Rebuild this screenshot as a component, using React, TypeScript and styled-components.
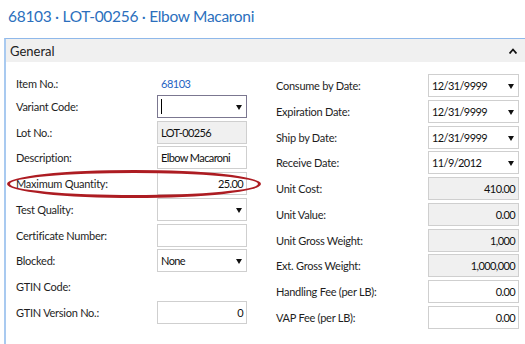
import React from "react";
import styled, { createGlobalStyle } from "styled-components";

const Global = createGlobalStyle`
  html, body { margin: 0; padding: 0; background: #fff; }
  body { font-family: Lato, "Open Sans", sans-serif; }
`;

const Page = styled.div`
  width: 525px;
  height: 344px;
  overflow: hidden;
  position: relative;
`;

const Title = styled.h1`
  margin: 0;
  padding: 7px 0 0 8px;
  height: 32px;
  box-sizing: border-box;
  font-size: 15.5px;
  font-weight: 400;
  color: #2b6fbd;
  letter-spacing: -0.3px;
  white-space: nowrap;
`;

const Panel = styled.section`
  margin-top: 6px;
  margin-left: 4px;
  border-left: 2px solid #a9caf0;
  border-top: 1px solid #8fb8ea;
  height: 310px;
`;

const PanelHeader = styled.div`
  height: 23px;
  background: #f0f0f0;
  display: flex;
  align-items: center;
  justify-content: space-between;
  padding: 0 8px 0 4px;
  font-size: 13px;
  color: #222;
`;

const Body = styled.div`
  display: grid;
  grid-template-columns: 231px 243px;
  column-gap: 29px;
  padding: 12px 0 0 10px;
`;

const Column = styled.div`
  display: flex;
  flex-direction: column;
  gap: 2.75px;
`;

const Row = styled.div<{ $labelWidth: number; $short?: boolean }>`
  position: relative;
  display: grid;
  grid-template-columns: ${(p) => p.$labelWidth}px 1fr;
  align-items: center;
  height: ${(p) => (p.$short ? 18 : 23)}px;
  font-size: 11px;
  color: #1e1e1e;
`;

const Label = styled.span`
  white-space: nowrap;
  letter-spacing: -0.25px;
`;

const Box = styled.div<{ $readOnly?: boolean; $focused?: boolean; $align?: string }>`
  position: relative;
  height: 23px;
  box-sizing: border-box;
  border: 1px solid ${(p) => (p.$focused ? "#7b7790" : "#cfcfcf")};
  background: ${(p) => (p.$readOnly ? "#f0f0f0" : "#fff")};
  display: flex;
  align-items: center;
  justify-content: ${(p) => (p.$align === "right" ? "flex-end" : "flex-start")};
  padding: 0 3px 0 3px;
  font-size: 11px;
  color: #111;
  letter-spacing: -0.6px;
  white-space: nowrap;
`;

const Caret = styled.span`
  position: absolute;
  right: 4px;
  top: 9px;
  width: 0;
  height: 0;
  border-left: 3.5px solid transparent;
  border-right: 3.5px solid transparent;
  border-top: 5px solid #111;
`;

const Cursor = styled.span`
  width: 1px;
  height: 15px;
  background: #000;
`;

const LinkValue = styled.span`
  color: #1f63c2;
  padding-left: 4px;
  font-size: 11px;
  letter-spacing: -0.5px;
`;

const Highlight = styled.div`
  position: absolute;
  left: -9px;
  right: -14px;
  top: -2px;
  height: 28px;
  box-sizing: border-box;
  border: 3px solid #ad1c22;
  border-radius: 50%;
  pointer-events: none;
`;

const Chevron = () => (
  <svg width="8" height="6" viewBox="0 0 8 6">
    <path d="M0.5 5.5 L4 1.5 L7.5 5.5" fill="none" stroke="#111" strokeWidth="1.8" />
  </svg>
);

type Field = {
  label: string;
  value?: string;
  kind?: "link" | "none" | "text" | "select" | "readonly";
  align?: "right";
  focused?: boolean;
  highlight?: boolean;
};

const left: Field[] = [
  { label: "Item No.:", value: "68103", kind: "link" },
  { label: "Variant Code:", kind: "select", focused: true },
  { label: "Lot No.:", value: "LOT-00256", kind: "readonly" },
  { label: "Description:", value: "Elbow Macaroni", kind: "text" },
  { label: "Maximum Quantity:", value: "25.00", kind: "text", align: "right", highlight: true },
  { label: "Test Quality:", kind: "select" },
  { label: "Certificate Number:", kind: "text" },
  { label: "Blocked:", value: "None", kind: "select" },
  { label: "GTIN Code:", kind: "none" },
  { label: "GTIN Version No.:", value: "0", kind: "text", align: "right" },
];

const right: Field[] = [
  { label: "Consume by Date:", value: "12/31/9999", kind: "select" },
  { label: "Expiration Date:", value: "12/31/9999", kind: "select" },
  { label: "Ship by Date:", value: "12/31/9999", kind: "select" },
  { label: "Receive Date:", value: "11/9/2012", kind: "select" },
  { label: "Unit Cost:", value: "410.00", kind: "readonly", align: "right" },
  { label: "Unit Value:", value: "0.00", kind: "readonly", align: "right" },
  { label: "Unit Gross Weight:", value: "1,000", kind: "readonly", align: "right" },
  { label: "Ext. Gross Weight:", value: "1,000,000", kind: "readonly", align: "right" },
  { label: "Handling Fee (per LB):", value: "0.00", kind: "text", align: "right" },
  { label: "VAP Fee (per LB):", value: "0.00", kind: "text", align: "right" },
];

const FieldRow = ({ f, labelWidth }: { f: Field; labelWidth: number }) => {
  let control: React.ReactNode = null;
  if (f.kind === "link") control = <LinkValue>{f.value}</LinkValue>;
  else if (f.kind !== "none")
    control = (
      <Box $readOnly={f.kind === "readonly"} $focused={f.focused} $align={f.align}>
        {f.focused && <Cursor />}
        {f.value}
        {f.kind === "select" && <Caret />}
      </Box>
    );
  return (
    <Row $labelWidth={labelWidth} $short={f.kind === "link"}>
      <Label>{f.label}</Label>
      {control}
      {f.highlight && <Highlight />}
    </Row>
  );
};

export default function App() {
  return (
    <Page>
      <Global />
      <Title>68103 · LOT-00256 · Elbow Macaroni</Title>
      <Panel>
        <PanelHeader>
          <span>General</span>
          <Chevron />
        </PanelHeader>
        <Body>
          <Column>
            {left.map((f) => (
              <FieldRow key={f.label} f={f} labelWidth={141} />
            ))}
          </Column>
          <Column>
            {right.map((f) => (
              <FieldRow key={f.label} f={f} labelWidth={152} />
            ))}
          </Column>
        </Body>
      </Panel>
    </Page>
  );
}
